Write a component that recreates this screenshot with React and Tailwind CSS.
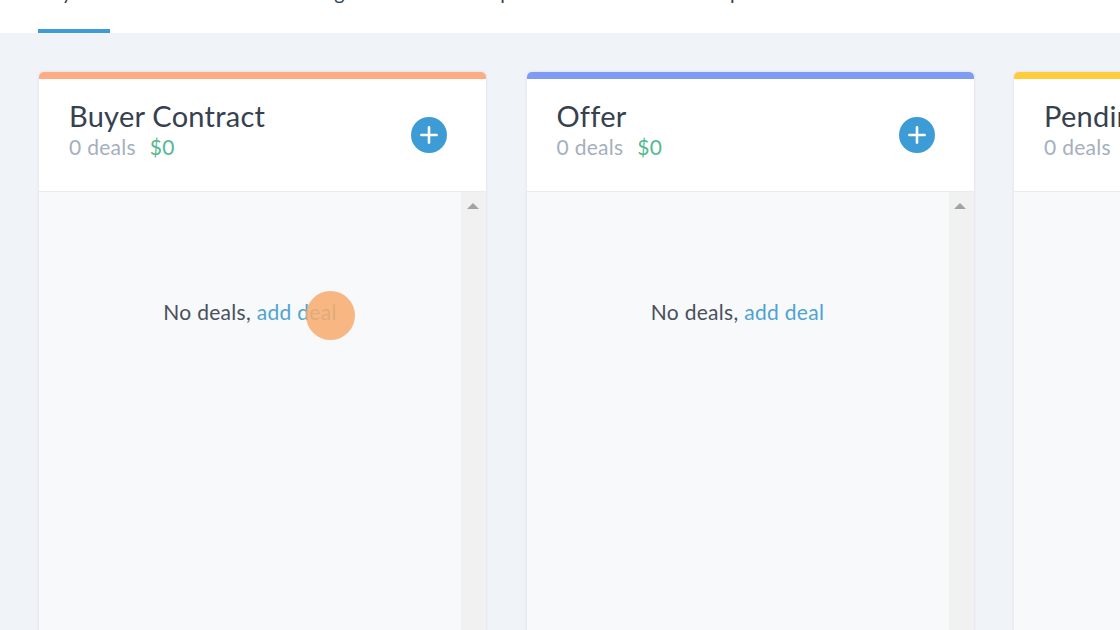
import { Plus } from "lucide-react";

const tabs = [
  { label: "Buyers", width: "w-[72px]", active: true },
  { label: "Sellers", width: "w-[85px]" },
  { label: "Management Deals", width: "w-[145px]" },
  { label: "Inspections", width: "w-[115px]" },
  { label: "Closed Properties", width: "w-[180px]" },
  { label: "All", width: "w-[40px]" },
];

const stages = [
  { name: "Buyer Contract", bar: "bg-[#ffab84]" },
  { name: "Offer", bar: "bg-[#7f9cf5]" },
  { name: "Pending", bar: "bg-[#ffcc3d]" },
];

function Column({ name, bar }) {
  return (
    <div className="w-[447px] shrink-0 flex flex-col rounded-t-[5px] overflow-hidden shadow-[0_0_3px_rgba(120,130,150,0.22)]">
      <div className={`h-[7px] ${bar}`} />
      <div className="h-[113px] bg-white border-b border-[#e8eaee] pl-[30px] pr-[39px] pt-[20px] flex justify-between">
        <div>
          <h2 className="text-[29px] leading-[34px] tracking-[0.25px] text-[#36404f] whitespace-nowrap">{name}</h2>
          <p className="mt-[2px] text-[21px] leading-[24px] tracking-[0.3px] text-[#a5afbd] whitespace-nowrap">
            0 deals <span className="ml-[8px] text-[#55b990]">$0</span>
          </p>
        </div>
        <button className="mt-[18px] w-[36px] h-[36px] rounded-full bg-[#3d9cd6] flex items-center justify-center text-white">
          <Plus size={26} strokeWidth={2.4} />
        </button>
      </div>
      <div className="flex-1 bg-[#f7f9fb] flex">
        <div className="flex-1 pt-[107px] text-center text-[21px] leading-[26px] tracking-[0.3px] text-[#4a4f5c]">
          No deals, <a className="text-[#4fa3d1]">add deal</a>
        </div>
        <div className="w-[25px] bg-[#f1f1f1] flex justify-center pt-[11px] pr-[2px]">
          <div className="w-0 h-0 border-x-[6px] border-x-transparent border-b-[6px] border-b-[#a3a3a3]" />
        </div>
      </div>
    </div>
  );
}

export default function App() {
  return (
    <div className="relative w-[1120px] h-[630px] overflow-hidden flex flex-col bg-[#f0f3f8] font-['Lato','Liberation_Sans',sans-serif]">
      <div className="h-[33px] shrink-0 bg-white overflow-hidden flex items-end gap-[45px] pl-[38px]">
        {tabs.map((tab) => (
          <div key={tab.label} className={`${tab.width} shrink-0 h-[53px] flex flex-col justify-between`}>
            <span className="text-[20px] leading-[24px] text-[#36404f] whitespace-nowrap">{tab.label}</span>
            <div className={`h-[4px] ${tab.active ? "bg-[#3d9cd6]" : ""}`} />
          </div>
        ))}
      </div>
      <div className="flex-1 flex gap-[40.5px] pl-[39px] pt-[39px] -mb-[20px]">
        {stages.map((stage) => (
          <Column key={stage.name} {...stage} />
        ))}
      </div>
      <div className="absolute left-[306px] top-[291px] w-[49px] h-[49px] rounded-full bg-[#f8ab6c]/85" />
    </div>
  );
}
